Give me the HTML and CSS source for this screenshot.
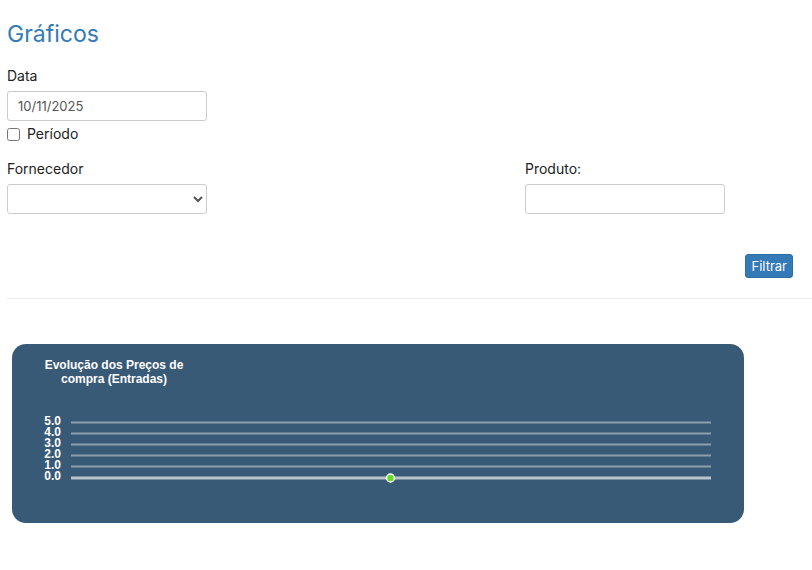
FILE: index.html
```html
<!DOCTYPE html>
<html lang="pt">
  <head>
    <meta charset="utf-8" />
    <title>Gráficos</title>
    <link rel="stylesheet" href="styles.css">
  </head>
  <body>
    <div class="container">
      <h1 class="page-title">Gráficos</h1>
      <form class="filters">
        <div class="field">
          <label class="field-label" for="data">Data</label>
          <input class="form-control" id="data" type="text" value="10/11/2025">
          <label class="check"><input type="checkbox"> Período</label>
        </div>
        <div class="row">
          <div class="field">
            <label class="field-label" for="fornecedor">Fornecedor</label>
            <select class="form-control" id="fornecedor"><option></option></select>
          </div>
          <div class="field">
            <label class="field-label" for="produto">Produto:</label>
            <input class="form-control" id="produto" type="text">
          </div>
        </div>
        <div class="actions">
          <button class="btn" type="button">Filtrar</button>
        </div>
      </form>
      <hr class="divider">
      <div class="chart-card">
        <svg class="chart" width="732" height="179" viewBox="0 0 732 179">
          <text class="chart-title" x="102" y="25">Evolução dos Preços de</text>
          <text class="chart-title" x="102" y="39">compra (Entradas)</text>
          <g class="grid">
            <line x1="59" x2="699" y1="78.5" y2="78.5" />
            <line x1="59" x2="699" y1="89.5" y2="89.5" />
            <line x1="59" x2="699" y1="100.5" y2="100.5" />
            <line x1="59" x2="699" y1="111.5" y2="111.5" />
            <line x1="59" x2="699" y1="122.5" y2="122.5" />
          </g>
          <line class="axis" x1="59" x2="699" y1="134" y2="134" />
          <g class="ticks">
            <text x="49" y="81">5.0</text>
            <text x="49" y="92">4.0</text>
            <text x="49" y="103">3.0</text>
            <text x="49" y="114">2.0</text>
            <text x="49" y="125">1.0</text>
            <text x="49" y="136">0.0</text>
          </g>
          <circle class="point" cx="378.5" cy="134" r="4" />
        </svg>
      </div>
    </div>
  </body>
</html>
```

FILE: styles.css
```css
html, body {
  margin: 0;
  background: #fff;
}

body {
  font-family: Inter, "Noto Sans", "Liberation Sans", sans-serif;
  font-size: 14px;
  color: #222;
}

.container {
  padding: 0 0 0 7px;
}

.page-title {
  margin: 20px 0 0;
  font-size: 23px;
  font-weight: 400;
  line-height: 28px;
  color: #337ab7;
}

.filters {
  margin-top: 18px;
}

.field {
  display: flex;
  flex-direction: column;
  align-items: flex-start;
}

.field-label {
  line-height: 20px;
  margin-bottom: 5px;
}

.form-control {
  box-sizing: border-box;
  width: 200px;
  height: 30px;
  padding: 4px 10px;
  border: 1px solid #ccc;
  border-radius: 3px;
  background: #fff;
  font: inherit;
  font-size: 13px;
  color: #555;
}

.check {
  display: flex;
  align-items: center;
  gap: 7px;
  margin-top: 4px;
  line-height: 18px;
}

.check input {
  margin: 0;
  width: 13px;
  height: 13px;
}

.row {
  display: grid;
  grid-template-columns: 518px 1fr;
  margin-top: 16px;
}

.actions {
  display: flex;
  justify-content: flex-end;
  padding-right: 19px;
  margin-top: 40px;
}

.btn {
  height: 24px;
  padding: 0 5px;
  border: 1px solid #2e6da4;
  border-radius: 3px;
  background: #337ab7;
  color: #fff;
  font: inherit;
  font-size: 13px;
}

.divider {
  margin: 20px 0 0;
  border: 0;
  border-top: 1px solid #eee;
}

.chart-card {
  width: 732px;
  height: 179px;
  margin: 45px 0 0 5px;
  border-radius: 14px;
  background: #385a77;
  overflow: hidden;
}

.chart {
  display: block;
}

.chart-title {
  font-family: "Liberation Sans", Arial, sans-serif;
  font-size: 12px;
  font-weight: 700;
  fill: #fff;
  text-anchor: middle;
}

.grid line {
  stroke: #8c9eac;
  stroke-width: 2;
}

.axis {
  stroke: #b9c3cc;
  stroke-width: 3;
}

.ticks text {
  font-family: "Liberation Sans", Arial, sans-serif;
  font-size: 12px;
  font-weight: 700;
  fill: #fff;
  text-anchor: end;
}

.point {
  fill: #66dd22;
  stroke: #fff;
  stroke-width: 1.5;
}
```
